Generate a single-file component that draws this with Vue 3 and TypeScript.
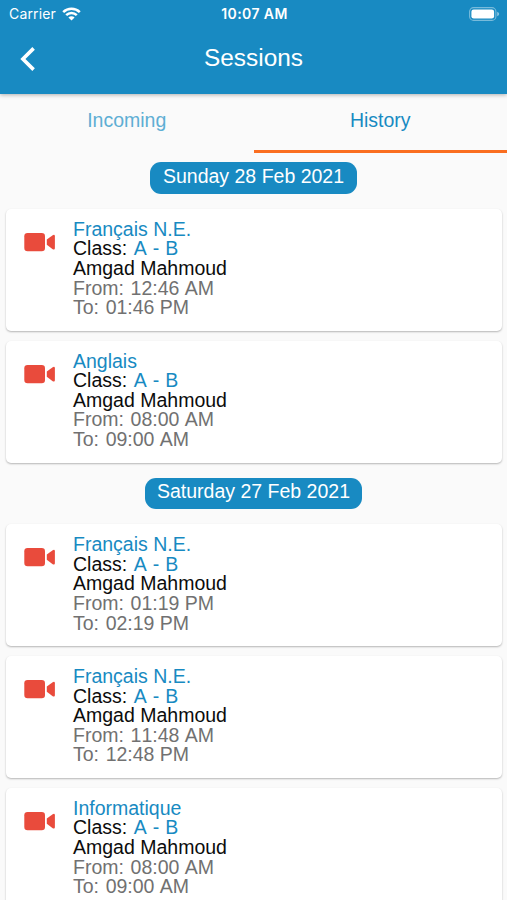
<script setup lang="ts">
interface Session {
  subject: string
  group: string
  teacher: string
  from: string
  to: string
}

interface Day {
  label: string
  sessions: Session[]
}

const teacher = 'Amgad Mahmoud'
const group = 'A - B'

const days: Day[] = [
  {
    label: 'Sunday 28 Feb 2021',
    sessions: [
      { subject: 'Français N.E.', group, teacher, from: '12:46 AM', to: '01:46 PM' },
      { subject: 'Anglais', group, teacher, from: '08:00 AM', to: '09:00 AM' },
    ],
  },
  {
    label: 'Saturday 27 Feb 2021',
    sessions: [
      { subject: 'Français N.E.', group, teacher, from: '01:19 PM', to: '02:19 PM' },
      { subject: 'Français N.E.', group, teacher, from: '11:48 AM', to: '12:48 PM' },
      { subject: 'Informatique', group, teacher, from: '08:00 AM', to: '09:00 AM' },
    ],
  },
]
</script>

<template>
  <div class="screen">
    <header class="header">
      <div class="status">
        <div class="carrier">
          <span class="carrier-name">Carrier</span>
          <svg class="wifi" viewBox="0 0 19 14" width="19" height="14">
            <path d="M1.2 5.1a11.8 11.8 0 0 1 16.6 0M4.2 8.1a7.6 7.6 0 0 1 10.6 0" fill="none" stroke="#fff" stroke-width="2.5" />
            <path d="M9.5 13.6 6.4 10.5a4.4 4.4 0 0 1 6.2 0z" fill="#fff" />
          </svg>
        </div>
        <span class="time">10:07 AM</span>
        <svg class="battery" viewBox="0 0 31 14" width="31" height="14">
          <rect x="0.6" y="0.6" width="26.3" height="12.8" rx="4" fill="none" stroke="#fff" stroke-opacity=".42" stroke-width="1.1" />
          <rect x="2.4" y="2.4" width="22.7" height="9.2" rx="2.3" fill="#fff" />
          <path d="M28.2 4.7q2 .8 2 2.3t-2 2.3z" fill="#fff" fill-opacity=".5" />
        </svg>
      </div>
      <div class="navbar">
        <svg class="back" viewBox="0 0 16 26" width="16" height="26">
          <path d="M13.6 2.4 2.9 13l10.7 10.6" fill="none" stroke="#fff" stroke-width="3.6" />
        </svg>
        <h1 class="title">Sessions</h1>
      </div>
    </header>

    <nav class="tabs">
      <div class="tab">Incoming</div>
      <div class="tab active">History</div>
    </nav>

    <main class="list">
      <section v-for="day in days" :key="day.label" class="day">
        <h2 class="date">{{ day.label }}</h2>
        <article v-for="(s, i) in day.sessions" :key="i" class="card">
          <svg class="camera" viewBox="0 0 32 20" width="32" height="20">
            <rect x="0.3" y="0.9" width="20.7" height="18.3" rx="3.3" fill="#e94b3c" />
            <path d="M22.8 7.6 28.7 3.2q2.2-1 2.2 1v12q0 2-2.2 1l-5.9-4.4z" fill="#e94b3c" />
          </svg>
          <div class="info">
            <div class="blue">{{ s.subject }}</div>
            <div class="row"><span class="label">Class: </span><span class="blue group">{{ s.group }}</span></div>
            <div>{{ s.teacher }}</div>
            <div class="row grey"><span class="label">From: </span>{{ s.from }}</div>
            <div class="row grey"><span class="label">To: </span>{{ s.to }}</div>
          </div>
        </article>
      </section>
    </main>
  </div>
</template>

<style>
body {
  background: #fafafa;
  overflow: hidden;
}
</style>

<style scoped>
.screen {
  height: 900px;
  overflow: hidden;
  display: flex;
  flex-direction: column;
  background: #fafafa;
  color: #0c0c0c;
  font: 19.5px/19.6px "Liberation Sans", Arial, sans-serif;
}

.header {
  flex: none;
  height: 94px;
  background: #188ac2;
  color: #fff;
  box-shadow: 0 1px 4px rgba(0, 0, 0, 0.3);
}

.status {
  display: grid;
  grid-template-columns: 1fr auto 1fr;
  align-items: center;
  height: 27px;
  padding: 0 7px 0 9px;
  font: 14px/27px Inter, sans-serif;
}

.carrier {
  display: flex;
  align-items: center;
  gap: 6px;
}

.carrier-name {
  letter-spacing: 0.15px;
}

.time {
  font-weight: 600;
  letter-spacing: 0.4px;
}

.battery {
  justify-self: end;
}

.navbar {
  display: grid;
  grid-template-columns: 1fr auto 1fr;
  align-items: center;
  height: 64px;
  padding: 0 20px;
}

.title {
  margin: 0;
  font-size: 24.4px;
  font-weight: 400;
  line-height: 28px;
  padding-bottom: 3px;
}

.tabs {
  flex: none;
  display: grid;
  grid-template-columns: 1fr 1fr;
  height: 59px;
}

.tab {
  box-sizing: border-box;
  padding-top: 16.5px;
  text-align: center;
  color: #5eaed4;
  border-bottom: 3px solid transparent;
}

.tab.active {
  color: #188ac2;
  border-color: #fa6e20;
}

.list {
  flex: none;
  padding: 9.2px 5px 0 6px;
}

.day {
  display: flex;
  flex-direction: column;
  margin-bottom: 15px;
}

.date {
  align-self: center;
  box-sizing: border-box;
  height: 31.8px;
  margin: 0 1px 15px 0;
  padding: 4.9px 12.5px 0;
  border-radius: 11px;
  background: #188ac2;
  color: #fff;
  font-size: 19.5px;
  font-weight: 400;
  line-height: 19.6px;
}

.card {
  box-sizing: border-box;
  display: flex;
  align-items: flex-start;
  gap: 17px;
  height: 121.8px;
  padding: 10.8px 18px 0;
  border-radius: 5px;
  background: #fff;
  box-shadow: 0 1px 2px rgba(0, 0, 0, 0.28);
}

.card + .card {
  margin-top: 10px;
}

.camera {
  flex: none;
  margin-top: 12.2px;
}

.row {
  font-kerning: none;
}

.label {
  font-kerning: normal;
  margin-right: 1.2px;
}

.group {
  word-spacing: 0.5px;
}

.blue {
  color: #188ac2;
}

.grey {
  color: #717171;
}
</style>
